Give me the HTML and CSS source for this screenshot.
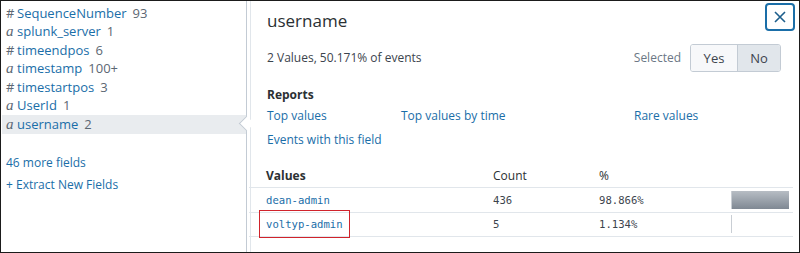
FILE: index.html
```html
<!DOCTYPE html>
<html lang="en">

<head>
    <meta charset="UTF-8">
    <title>Field summary | username</title>
    <link rel="stylesheet" href="styles.css">
</head>

<body>
    <div class="frame">
        <div class="sidebar">
            <ul class="field-list">
                <li class="field"><span class="type">#</span><span class="name">SequenceNumber</span><span class="count">93</span></li>
                <li class="field"><span class="type type-str">a</span><span class="name">splunk_server</span><span class="count">1</span></li>
                <li class="field"><span class="type">#</span><span class="name">timeendpos</span><span class="count">6</span></li>
                <li class="field"><span class="type type-str">a</span><span class="name">timestamp</span><span class="count">100+</span></li>
                <li class="field"><span class="type">#</span><span class="name">timestartpos</span><span class="count">3</span></li>
                <li class="field"><span class="type type-str">a</span><span class="name">UserId</span><span class="count">1</span></li>
                <li class="field active"><span class="type type-str">a</span><span class="name">username</span><span class="count">2</span></li>
            </ul>
            <a class="side-link more" href="#">46 more fields</a>
            <a class="side-link" href="#">+ Extract New Fields</a>
        </div>

        <div class="flyout">
            <span class="notch"></span>
            <div class="flyout-head">
                <h2>username</h2>
                <button class="close" aria-label="Close">
                    <svg width="12" height="12" viewBox="0 0 12 12">
                        <path d="M1 1 L11 11 M11 1 L1 11" stroke="#1d5e8c" stroke-width="1.6" fill="none" />
                    </svg>
                </button>
            </div>

            <div class="summary">
                <span>2 Values, 50.171% of events</span>
                <div class="selected">
                    <span class="selected-label">Selected</span>
                    <div class="toggle">
                        <button class="toggle-btn">Yes</button>
                        <button class="toggle-btn on">No</button>
                    </div>
                </div>
            </div>

            <h3 class="reports-title">Reports</h3>
            <div class="reports">
                <a href="#">Top values</a>
                <a href="#">Top values by time</a>
                <a href="#">Rare values</a>
                <a href="#">Events with this field</a>
            </div>

            <div class="values">
                <div class="vrow vhead">
                    <span>Values</span>
                    <span>Count</span>
                    <span>%</span>
                    <span></span>
                </div>
                <div class="vrow">
                    <span class="val"><a href="#">dean-admin</a></span>
                    <span class="num">436</span>
                    <span class="mono">98.866%</span>
                    <span class="bar-cell"><span class="bar" style="width: 98.866%"></span></span>
                </div>
                <div class="vrow">
                    <span class="val"><a href="#" class="marked">voltyp-admin</a></span>
                    <span class="num">5</span>
                    <span class="mono">1.134%</span>
                    <span class="bar-cell"><span class="bar" style="width: 1.134%"></span></span>
                </div>
            </div>
        </div>
    </div>
</body>

</html>
```

FILE: styles.css
```css
* {
    margin: 0;
    padding: 0;
    box-sizing: border-box;
}

body {
    background: #fff;
    font-family: "Open Sans", "Liberation Sans", sans-serif;
    font-size: 12px;
    line-height: 18px;
    color: #3c444d;
}

a {
    color: #1a6ea8;
    text-decoration: none;
}

.frame {
    width: 800px;
    height: 253px;
    border: 1px solid #1b1b1b;
    display: flex;
    overflow: hidden;
}

/* left field list */

.sidebar {
    width: 245px;
    flex: none;
    overflow: hidden;
}

.field-list {
    list-style: none;
    margin-top: 2.5px;
    font-size: 13px;
}

.field {
    display: flex;
    align-items: center;
    height: 18.5px;
    padding-left: 5px;
    white-space: nowrap;
}

.field.active {
    background: #e9ecef;
    margin-left: 1px;
    padding-left: 4px;
    height: 19px;
}

.type {
    width: 11px;
    color: #5c6773;
    font-size: 13px;
}

.type-str {
    font-family: "Liberation Serif", serif;
    font-style: italic;
    font-size: 15px;
    line-height: 1;
}

.name {
    color: #1a6ea8;
    margin-right: 6px;
}

.count {
    color: #5c6773;
}

.side-link {
    display: block;
    padding-left: 5px;
    line-height: 22px;
}

.side-link.more {
    margin-top: 18px;
}

/* flyout */

.flyout {
    position: relative;
    flex: 1;
    border-left: 1px solid #c3cbd4;
    box-shadow: inset 3px 0 0 #fff, inset 4px 0 0 #e1e6eb;
    padding-left: 4px;
}

.notch {
    position: absolute;
    left: -6px;
    top: 117px;
    width: 11px;
    height: 11px;
    background: #fff;
    border-left: 1px solid #c3cbd4;
    border-bottom: 1px solid #c3cbd4;
    transform: rotate(45deg);
}

.flyout-head {
    display: flex;
    justify-content: space-between;
    align-items: flex-start;
    padding: 2px 4px 0 16px;
    height: 41px;
}

.flyout-head h2 {
    font-size: 17px;
    font-weight: 500;
    line-height: 22px;
    color: #2b3033;
    margin-top: 7px;
}

.close {
    width: 30px;
    height: 28px;
    border: 2px solid #1a6ea8;
    border-radius: 4px;
    background: #fff;
    display: flex;
    align-items: center;
    justify-content: center;
}

.summary {
    display: flex;
    justify-content: space-between;
    align-items: center;
    padding: 0 18px 0 16px;
    height: 32px;
}

.selected {
    display: flex;
    align-items: center;
    gap: 9px;
}

.selected-label {
    color: #6b7785;
}

.toggle {
    display: flex;
    border: 1px solid #c3cbd4;
    border-radius: 3px;
    overflow: hidden;
    height: 28px;
}

.toggle-btn {
    font: inherit;
    font-size: 13px;
    color: #3c444d;
    border: none;
    background: #f7f8fa;
    width: 46px;
}

.toggle-btn.on {
    background: #e1e6eb;
    border-left: 1px solid #c3cbd4;
    width: 43px;
}

.reports-title {
    font-size: 12px;
    font-weight: 700;
    color: #2b3033;
    padding-left: 16px;
    margin-top: 12px;
}

.reports {
    display: grid;
    grid-template-columns: 134px 233px auto;
    padding-left: 16px;
    row-gap: 6px;
    margin-top: 3px;
    line-height: 18px;
}

.values {
    margin-top: 16px;
    margin-left: -2px;
    margin-right: 6px;
}

.vrow {
    display: grid;
    grid-template-columns: 227px 106px 132px 1fr;
    align-items: center;
    padding-left: 17px;
    height: 24.5px;
    border-bottom: 1px solid #e1e6eb;
}

.vhead {
    height: 23px;
    color: #2b3033;
}

.vhead span:first-child {
    font-weight: 700;
}

.val a,
.mono,
.num {
    font-family: "DejaVu Sans Mono", monospace;
    font-size: 10.6px;
}

.num,
.mono {
    color: #3c444d;
}

.marked {
    outline: 1.5px solid #d0232b;
    padding: 7px 6px;
    margin-left: -6px;
}

.bar-cell {
    display: block;
    height: 18px;
    margin-right: 3px;
}

.bar {
    display: block;
    height: 100%;
    min-width: 1px;
    background: linear-gradient(#b7bdc4, #7f8893);
    border-left: 1px solid #c9ced4;
}
```
